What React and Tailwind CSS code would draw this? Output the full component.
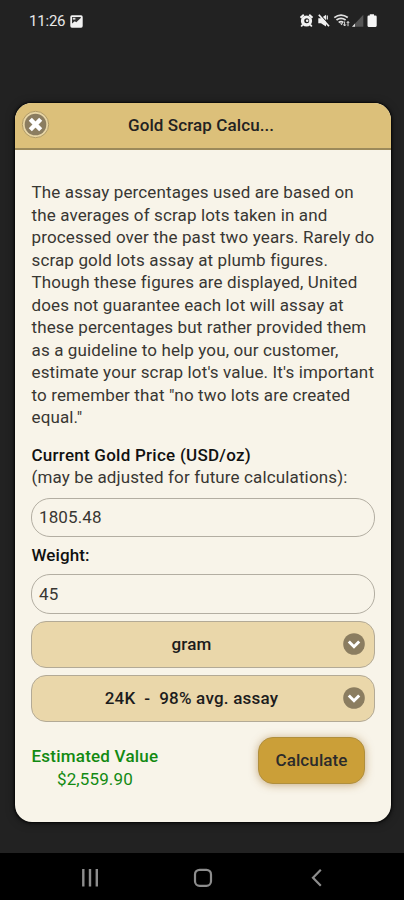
import React from 'react';

const disclaimer = [
  'The assay percentages used are based on',
  'the averages of scrap lots taken in and',
  'processed over the past two years. Rarely do',
  'scrap gold lots assay at plumb figures.',
  'Though these figures are displayed, United',
  'does not guarantee each lot will assay at',
  'these percentages but rather provided them',
  'as a guideline to help you, our customer,',
  "estimate your scrap lot's value. It's important",
  'to remember that "no two lots are created',
  'equal."',
];

const StatusBar = () => (
  <div className="h-[103px] pt-3 pl-[29px] pr-[27px] flex items-start justify-between shrink-0">
    <div className="flex items-center h-[19px] text-[#e8e8e8]">
      <span className="text-[15px] leading-[19px] tracking-[-0.2px]">11:26</span>
      <svg className="ml-[5px] w-[13px] h-[13px]" viewBox="0 0 13 13">
        <rect x="0.3" y="0.3" width="12.4" height="12.4" rx="1.6" fill="#f2f2f2" />
        <path d="M2 8.6 4.8 6.2 6.3 7.3 10.8 3V2H2Z" fill="#333" />
        <rect x="2.8" y="2.8" width="2.6" height="1.8" fill="#ddd" />
      </svg>
    </div>
    {/* alarm, mute, wifi, signal, battery */}
    <svg className="mt-[2px] w-[78px] h-[14px]" viewBox="299 14 78 14">
      <g fill="#f2f2f2">
        <circle cx="306.5" cy="21" r="5.6" />
        <path d="M300.5 17.8 303.8 14.8M309.2 14.8 312.5 17.8" stroke="#f2f2f2" strokeWidth="2" />
        <path d="M302.8 24.5 301.2 26.5M310.2 24.5 311.8 26.5" stroke="#f2f2f2" strokeWidth="1.8" />
        <circle cx="306.7" cy="20.8" r="2.5" fill="#222" />
        <circle cx="307.2" cy="20.8" r="1.3" />
        <path d="M318.3 18.3H321L326 14.8V26.4L321 23.2H318.3Z" />
        <path d="M320 14.6 329.8 25.2" stroke="#222" strokeWidth="1.2" />
        <path d="M318.8 14.8 329 26.2" stroke="#f2f2f2" strokeWidth="1.7" />
        <path d="M327.3 15.5V19.5" stroke="#ddd" strokeWidth="1.3" />
      </g>
      <g fill="none" stroke="#e0e0e0" strokeWidth="1.8">
        <path d="M334.3 17.6Q341 12.6 347.8 17.6" />
        <path d="M336.5 20.1Q341 16.8 345.6 20.1" />
        <path d="M338.7 22.4Q341 20.8 343.4 22.4" />
      </g>
      <path d="M340 23.3H343L341.5 25.3Z" fill="#e0e0e0" />
      <path d="M344.6 21.5V26M343.3 24.4 344.6 26 345.9 24.4M348 26.2V21.5M346.8 23 348 21.5 349.2 23" fill="none" stroke="#ddd" strokeWidth="1" />
      <path d="M352 26.7 363.3 14.8V26.7Z" fill="#555" />
      <path d="M352 26.7 355 23.6V26.7Z" fill="#ddd" />
      <path d="M369.8 14.2H374V15.6H375.5Q376.7 15.6 376.7 16.8V25.8Q376.7 26.9 375.6 26.9H368.6Q367.5 26.9 367.5 25.8V16.8Q367.5 15.6 368.7 15.6H369.8Z" fill="#f5f5f5" />
    </svg>
  </div>
);

const SelectField = ({ label, className }) => (
  <button
    className={`relative w-full h-[47px] rounded-[15px] border border-[#b3aa96] bg-[#ead7aa] pr-[23px] flex items-center justify-center text-[17px] font-medium tracking-[0.22px] text-[#1c1c1c] whitespace-pre ${className}`}
  >
    {label}
    <svg className="absolute right-[9px] top-[11px] w-[22px] h-[22px]" viewBox="0 0 22 22">
      <circle cx="11" cy="11" r="10.8" fill="#8b7d60" />
      <path d="M5.8 8.5 11 13.7 16.2 8.5" fill="none" stroke="#fff" strokeWidth="3" />
    </svg>
  </button>
);

const NavBar = () => (
  <div className="h-[47px] bg-black shrink-0">
    <svg className="w-full h-full" viewBox="0 0 404 47" fill="none" stroke="#8d8d8d">
      <path d="M83.3 16V33.5M90 16V33.5M96.8 16V33.5" strokeWidth="2.4" />
      <rect x="195" y="16.8" width="16" height="16" rx="4.6" strokeWidth="2.2" />
      <path d="M320.8 16.8 313 24.8 320.8 32.8" strokeWidth="2.2" />
    </svg>
  </div>
);

const App = () => {
  return (
    <div className="w-[404px] h-[900px] bg-[#222] flex flex-col overflow-hidden font-['Roboto',sans-serif] text-[#383733]">
      <StatusBar />

      <div className="ml-[15px] w-[376px] h-[719px] shrink-0 rounded-[17px] bg-[#f8f4e9] overflow-hidden shadow-[0_0_2px_1px_#080808,0_1px_8px_rgba(0,0,0,0.5)] flex flex-col">
        <div className="h-[47px] shrink-0 bg-[#dcc07a] border-b-2 border-[#9c8a5b] flex items-center">
          <svg className="ml-[6px] mt-[-2px] w-[29px] h-[29px]" viewBox="0 0 29 29">
            <circle cx="14.5" cy="14.5" r="13.2" fill="#e7d5a5" stroke="#b19b66" strokeWidth="1" />
            <circle cx="14.5" cy="14.5" r="10.8" fill="#8b7d60" />
            <path d="M9.3 9.3 19.7 19.7M19.7 9.3 9.3 19.7" stroke="#fff" strokeWidth="4.4" />
          </svg>
          <h1 className="ml-[78px] mt-[-1px] text-[17px] leading-[22px] font-medium tracking-[0.1px] text-[#222]">Gold Scrap Calcu...</h1>
        </div>

        <div className="px-4 pt-[31px] text-[17px] leading-[22.5px] tracking-[0.13px]">
          <p className="pl-[0.5px]">
            {disclaimer.map((line) => (
              <span key={line} className="block whitespace-nowrap">{line}</span>
            ))}
          </p>

          <div className="mt-[15px] pl-[0.5px] whitespace-nowrap">
            <div className="font-medium tracking-[0.25px] text-[#111]">Current Gold Price (USD/oz)</div>
            <div>(may be adjusted for future calculations):</div>
          </div>
          <div className="mt-[9px] h-[39px] rounded-[19px] border border-[#b3aea2] px-[7px] flex items-center">1805.48</div>

          <div className="mt-[7px] pl-[0.5px] font-medium text-[#111] tracking-[0.1px]">Weight:</div>
          <div className="mt-[8px] h-[40px] rounded-[19px] border border-[#b3aea2] px-[7px] flex items-center">45</div>

          <SelectField label="gram" className="mt-[7px]" />
          <SelectField label="24K  -  98% avg. assay" className="mt-[7px]" />

          <div className="mt-[15px] flex justify-between items-start">
            <div className="mt-[8px] pl-[0.5px] text-center text-[#128a12]">
              <div className="font-medium tracking-[0.22px]">Estimated Value</div>
              <div>$2,559.90</div>
            </div>
            <button className="mr-[10px] w-[107px] h-[47px] rounded-[15px] border border-[#b08f3d] bg-[#cb9f38] text-[17px] font-medium tracking-[0.1px] text-[#2b2b2b] shadow-[0_1px_9px_rgba(150,100,30,0.5)]">
              Calculate
            </button>
          </div>
        </div>
      </div>

      <div className="flex-1" />
      <NavBar />
    </div>
  );
};

export default App;
